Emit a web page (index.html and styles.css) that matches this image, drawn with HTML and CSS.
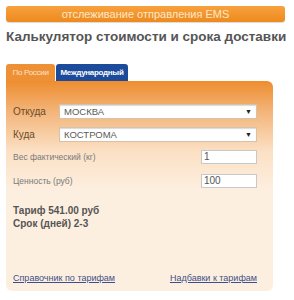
FILE: index.html
```html
<!DOCTYPE html>
<html lang="ru">
<head>
    <meta charset="UTF-8">
    <title>Калькулятор EMS</title>
    <link rel="stylesheet" href="styles.css">
</head>
<body>
    <div class="page">
        <div class="track-bar">отслеживание отправления EMS</div>
        <h1 class="title">Калькулятор стоимости и срока доставки</h1>
        <div class="tabs">
            <div class="tab tab-active">По России</div>
            <div class="tab tab-other">Международный</div>
        </div>
        <div class="panel">
            <div class="row row-city">
                <label class="city-label">Откуда</label>
                <div class="select"><span>МОСКВА</span><span class="arrow">▼</span></div>
            </div>
            <div class="row row-city">
                <label class="city-label">Куда</label>
                <div class="select"><span>КОСТРОМА</span><span class="arrow">▼</span></div>
            </div>
            <div class="row row-field">
                <label class="field-label">Вес фактический (кг)</label>
                <div class="input">1</div>
            </div>
            <div class="row row-field">
                <label class="field-label">Ценность (руб)</label>
                <div class="input">100</div>
            </div>
            <div class="result">
                <div>Тариф 541.00 руб</div>
                <div>Срок (дней) 2-3</div>
            </div>
            <div class="links">
                <a href="#">Справочник по тарифам</a>
                <a href="#">Надбавки к тарифам</a>
            </div>
        </div>
    </div>
</body>
</html>
```

FILE: styles.css
```css
body {
    margin: 0;
    background-color: #ffffff;
    font-family: "Liberation Sans", Arial, sans-serif;
}
.page {
    padding: 6px 9px 0 6px;
}
.track-bar {
    height: 16px;
    line-height: 16px;
    border-radius: 3px;
    background: linear-gradient(#f7a13e, #ee8a1e);
    color: #fde8c8;
    font-size: 11px;
    text-align: center;
    box-shadow: 0 1px 1px rgba(0, 0, 0, 0.15);
}
.title {
    margin: 7px 0 0 0;
    font-size: 13.5px;
    font-weight: bold;
    color: #555555;
    line-height: 16px;
    white-space: nowrap;
}
.tabs {
    display: flex;
    margin-top: 19px;
}
.tab {
    height: 17px;
    line-height: 17px;
    font-size: 8px;
    letter-spacing: -0.3px;
    text-align: center;
    white-space: nowrap;
    border-radius: 3px 3px 0 0;
    box-sizing: border-box;
}
.tab-active {
    background-color: #ee9035;
    color: #fde2c4;
    width: 49px;
}
.tab-other {
    background-color: #1d4b9b;
    color: #ffffff;
    font-weight: bold;
    margin-left: 1px;
    width: 72px;
}
.panel {
    margin-right: 12px;
    height: 210px;
    border-radius: 0 6px 6px 6px;
    background: linear-gradient(#ee8d2f 0px, #f3b478 30px, #fbe0c4 70px, #fdefe0 110px, #fdefe0 210px);
    padding: 23px 16px 0 7px;
    box-sizing: border-box;
    position: relative;
}
.row {
    display: flex;
    align-items: center;
    justify-content: space-between;
}
.row-city {
    height: 14px;
    margin-bottom: 9px;
}
.city-label {
    font-size: 10px;
    color: #6a4b2a;
    width: 46px;
}
.select {
    flex: 1;
    height: 13px;
    background-color: #ffffff;
    border: 1px solid #d6c2a8;
    box-shadow: inset 0 1px 1px rgba(0, 0, 0, 0.15);
    display: flex;
    justify-content: space-between;
    align-items: center;
    padding: 0 4px;
    font-size: 9.5px;
    color: #5a5a5a;
}
.arrow {
    font-size: 7px;
    color: #222222;
}
.row-field {
    height: 14px;
    margin-top: 3px;
    margin-bottom: 10px;
}
.field-label {
    font-size: 8.5px;
    color: #7a7a7a;
}
.input {
    width: 52px;
    height: 12px;
    border: 1px solid #c8c8c8;
    background-color: #ffffff;
    font-size: 10px;
    line-height: 12px;
    color: #555555;
    padding-left: 2px;
}
.result {
    margin-top: 16px;
    font-size: 10px;
    font-weight: bold;
    color: #555555;
    line-height: 13px;
}
.links {
    position: absolute;
    left: 7px;
    right: 16px;
    bottom: 8px;
    display: flex;
    justify-content: space-between;
    font-size: 9px;
}
.links a {
    color: #3d4f8a;
}
```
